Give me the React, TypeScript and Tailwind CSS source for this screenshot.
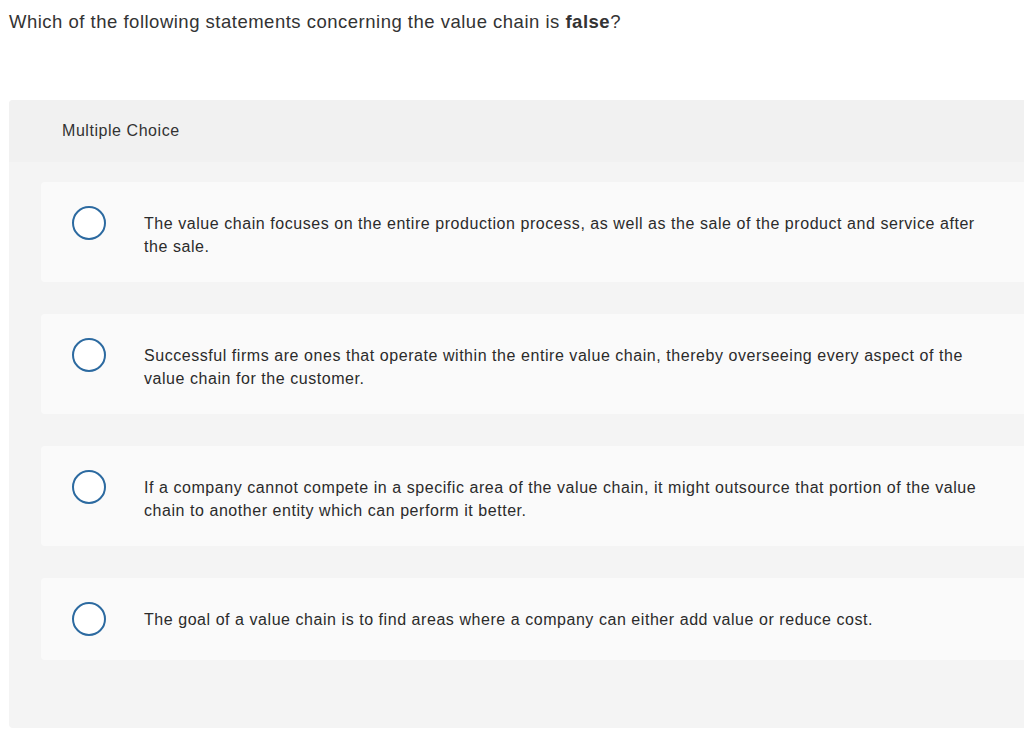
const options = [
  "The value chain focuses on the entire production process, as well as the sale of the product and service after the sale.",
  "Successful firms are ones that operate within the entire value chain, thereby overseeing every aspect of the value chain for the customer.",
  "If a company cannot compete in a specific area of the value chain, it might outsource that portion of the value chain to another entity which can perform it better.",
  "The goal of a value chain is to find areas where a company can either add value or reduce cost.",
]

export default function App() {
  return (
    <div className="w-[1024px] h-[739px] overflow-hidden bg-white font-['Liberation_Sans',sans-serif] text-[#333]">
      <div className="pl-[9px] pt-[10px] text-[18.5px] leading-[24px] tracking-[0.5px]">
        Which of the following statements concerning the value chain is <b className="font-bold">false</b>?
      </div>
      <div className="ml-[9px] mt-[66px] w-[1040px] rounded-[4px] bg-[#f4f4f4] overflow-hidden">
        <div className="h-[62px] bg-[#f1f1f1] pl-[53px] flex items-center text-[16px] tracking-[0.55px] text-[#333]">
          Multiple Choice
        </div>
        <div className="pl-[32px] pt-[20px] pb-[68px] flex flex-col gap-[32px]">
          {options.map((o, i) => (
            <div key={i} className="flex items-start rounded-[4px] bg-[#fafafa] p-[24px] pl-[31px]">
              <div className="w-[34px] h-[34px] shrink-0 rounded-full border-2 border-[#2c6aa0] bg-white" />
              <div className="ml-[38px] pt-[6px] w-[848px] text-[16px] leading-[23px] tracking-[0.55px] text-[#2b2b2b]">
                {o}
              </div>
            </div>
          ))}
        </div>
      </div>
    </div>
  )
}
